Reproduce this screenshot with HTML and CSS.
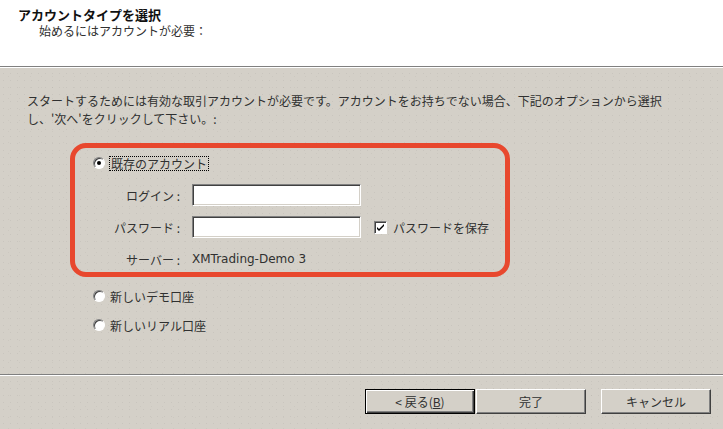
FILE: index.html
```
<!DOCTYPE html>
<html lang="ja">
<head>
    <meta charset="UTF-8">
    <meta name="viewport" content="width=device-width, initial-scale=1.0">
    <title>アカウントタイプを選択</title>
    <link rel="stylesheet" href="styles.css">
</head>
<body>
    <div class="wizard">
        <header class="wizard-head">
            <h1 class="title">アカウントタイプを選択</h1>
            <p class="subtitle">始めるにはアカウントが必要：</p>
        </header>
        <div class="sep"></div>

        <main class="wizard-body">
            <p class="intro">スタートするためには有効な取引アカウントが必要です。アカウントをお持ちでない場合、下記のオプションから選択<br>し、'次へ'をクリックして下さい。:</p>

            <div class="account-box">
                <label class="option">
                    <span class="radio checked"></span>
                    <span class="focus">既存のアカウント</span>
                </label>
                <div class="login-grid">
                    <span class="field-label">ログイン :</span>
                    <input class="field" type="text" id="login">
                    <span></span>

                    <span class="field-label">パスワード :</span>
                    <input class="field" type="password" id="password">
                    <label class="save">
                        <span class="checkbox">
                            <svg width="9" height="9" viewBox="0 0 9 9"><path d="M1 4 L3 6 L8 1 V3 L3 8 L1 6 Z" fill="#000"/></svg>
                        </span>
                        パスワードを保存
                    </label>

                    <span class="field-label">サーバー :</span>
                    <span class="server">XMTrading-Demo 3</span>
                </div>
            </div>

            <label class="option demo"><span class="radio"></span>新しいデモ口座</label>
            <label class="option real"><span class="radio"></span>新しいリアル口座</label>
        </main>

        <div class="sep"></div>
        <footer class="wizard-foot">
            <button class="btn default">&lt; 戻る(<u>B</u>)</button>
            <button class="btn">完了</button>
            <button class="btn cancel">キャンセル</button>
        </footer>
    </div>
</body>
</html>
```

FILE: styles.css
```
body {
    margin: 0;
    font-family: "Noto Sans CJK JP", "Noto Sans", sans-serif;
    font-size: 12px;
    color: #303030;
    background-color: #d4d0c8;
    background-image:
        radial-gradient(circle, rgba(0, 0, 0, 0.05) 0.7px, transparent 1px),
        radial-gradient(circle, rgba(0, 0, 0, 0.04) 0.7px, transparent 1px);
    background-size: 7px 7px, 11px 11px;
    background-position: 0 0, 3px 5px;
}

.wizard {
    width: 723px;
    height: 429px;
}

/* header */
.wizard-head {
    height: 66px;
    box-sizing: border-box;
    padding: 7px 0 0 18px;
    background: #fff;
}
.title {
    margin: 0;
    font-size: 13px;
    font-weight: bold;
    line-height: 16px;
    color: #111;
}
.subtitle {
    margin: 0 0 0 21px;
    line-height: 16px;
}

.sep {
    height: 1px;
    background: #808080;
    border-bottom: 1px solid #fff;
}

/* body */
.wizard-body {
    height: 306px;
    box-sizing: border-box;
    padding-top: 24px;
}
.intro {
    margin: 0 0 0 27px;
    line-height: 18px;
}

.account-box {
    margin: 15px 0 0 70px;
    width: 440px;
    height: 134px;
    box-sizing: border-box;
    padding-top: 7px;
    border: 5px solid #e8482e;
    border-radius: 16px;
}

.option {
    display: flex;
    align-items: center;
    height: 16px;
    padding-left: 18px;
}
.wizard-body > .option {
    padding-left: 93px;
}
.option.demo {
    margin-top: 11px;
}
.option.real {
    margin-top: 13px;
}

.radio {
    position: relative;
    width: 10px;
    height: 10px;
    margin-right: 5px;
    border: 1px solid;
    border-color: #808080 #fff #fff #808080;
    border-radius: 50%;
    background: #fff;
    box-shadow: inset 1px 1px 0 #404040;
}
.radio.checked::after {
    content: "";
    position: absolute;
    left: 3px;
    top: 3px;
    width: 4px;
    height: 4px;
    border-radius: 50%;
    background: #000;
}
.focus {
    margin-left: -1px;
    padding: 0 1px;
    line-height: 13px;
    border: 1px dotted #000;
}

.login-grid {
    display: grid;
    grid-template-columns: 105px 169px auto;
    grid-auto-rows: 22px;
    column-gap: 12px;
    row-gap: 10px;
    align-items: center;
    margin-top: 13px;
}
.field-label {
    text-align: right;
}
.field {
    width: 169px;
    height: 22px;
    box-sizing: border-box;
    margin: 0;
    padding: 2px 3px;
    border: 1px solid;
    border-color: #808080 #fff #fff #808080;
    background: #fff;
    box-shadow: inset 1px 1px 0 #404040, inset -1px -1px 0 #d4d0c8;
    font: inherit;
}
.server {
    font-family: "DejaVu Sans", sans-serif;
    font-size: 12px;
}

.save {
    display: flex;
    align-items: center;
    margin-left: 1px;
}
.checkbox {
    display: flex;
    align-items: center;
    justify-content: center;
    width: 11px;
    height: 11px;
    margin-right: 6px;
    border: 1px solid;
    border-color: #808080 #fff #fff #808080;
    background: #fff;
    box-shadow: inset 1px 1px 0 #404040;
}

/* footer buttons */
.wizard-foot {
    display: flex;
    justify-content: flex-end;
    padding: 13px 12px 0 0;
}
.btn {
    width: 110px;
    height: 25px;
    box-sizing: border-box;
    margin: 0;
    padding: 0;
    border: 1px solid;
    border-color: #fff #404040 #404040 #fff;
    background: #d4d0c8;
    box-shadow: inset -1px -1px 0 #808080;
    font: inherit;
    color: #303030;
}
.btn.default {
    margin-right: 1px;
    border-color: #000;
    box-shadow: inset 1px 1px 0 #fff, inset -1px -1px 0 #404040, inset -2px -2px 0 #808080;
}
.btn.cancel {
    margin-left: 15px;
}
```
